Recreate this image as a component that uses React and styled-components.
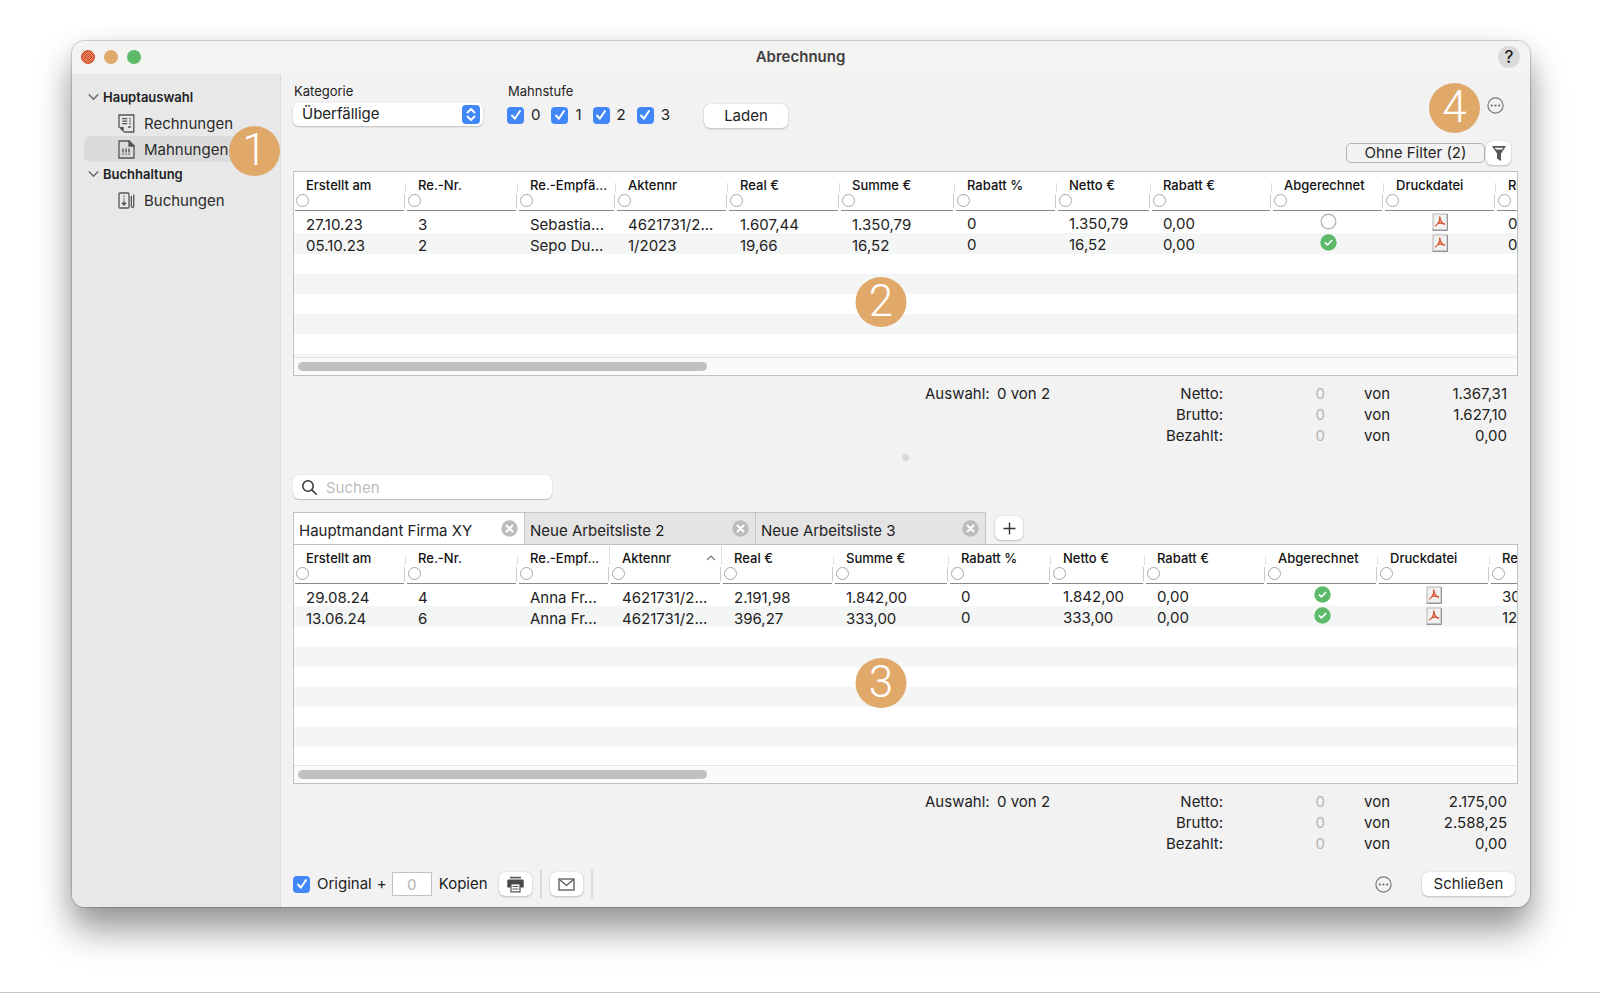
import React, { useState } from "react";
import styled, { createGlobalStyle, css } from "styled-components";

const GlobalStyle = createGlobalStyle`
  *, *::before, *::after {
    box-sizing: border-box;
  }

  body {
    background: #fff;
    color: #222;
    font-family: Inter, "Liberation Sans", sans-serif;
    font-size: 15px;
    line-height: 20px;
    margin: 0;
  }

  button, input, select {
    color: inherit;
    font: inherit;
    margin: 0;
  }
`;

const Desktop = styled.div`
  border-bottom: 1px solid #c6c6c6;
  display: flex;
  min-height: 100vh;
  overflow: hidden;
  padding: 41px 70px 85px 72px;
`;

const Window = styled.div`
  background: #f2f2f2;
  border-radius: 13px;
  box-shadow:
    0 0 1px 1px rgba(0, 0, 0, 0.18),
    0 24px 36px rgba(0, 0, 0, 0.36),
    0 8px 28px rgba(0, 0, 0, 0.12);
  display: flex;
  flex: 1;
  flex-direction: column;
  min-width: 0;
`;

const TitleBar = styled.header`
  align-items: center;
  background: #f3f3f2;
  border-radius: 13px 13px 0 0;
  display: grid;
  grid-template-columns: 1fr auto 1fr;
  height: 33px;
  padding: 0 10px 2px 9px;
`;

const Lights = styled.div`
  display: flex;
  gap: 9px;
`;

const Light = styled.button`
  background: ${({ $color }) => $color};
  border: 0;
  border-radius: 50%;
  height: 14px;
  padding: 0;
  width: 14px;

  ${({ $dotted }) =>
    $dotted &&
    css`
      background-image: repeating-conic-gradient(#d9402f 0 25%, #e09a64 0 50%);
      background-size: 2px 2px;
      border: 1px solid #d8503a;
    `}
`;

const Title = styled.h1`
  color: #404040;
  font-size: 15px;
  font-weight: 600;
  margin: 0;
`;

const HelpButton = styled.button`
  background: #dadada;
  border: 0;
  border-radius: 50%;
  font-size: 17px;
  font-weight: 500;
  height: 22px;
  justify-self: end;
  line-height: 22px;
  padding: 0;
  width: 22px;
`;

const Body = styled.div`
  display: flex;
  flex: 1;
  min-height: 0;
`;

const Sidebar = styled.nav`
  background: #e8e8e8;
  border-radius: 0 0 0 13px;
  border-right: 1px solid #dcdcdc;
  flex: none;
  padding: 11px 12px;
  width: 209px;
`;

const SideHeading = styled.h2`
  align-items: center;
  display: flex;
  font-size: 13px;
  font-weight: 600;
  gap: 4px;
  height: 25px;
  margin: 0;
  padding: 0 0 2px 4px;
`;

const SideLink = styled.a`
  align-items: center;
  background: ${({ $active }) => ($active ? "#dbdbdb" : "transparent")};
  border-radius: 6px;
  color: #2b2b2b;
  display: flex;
  gap: 9px;
  height: 26px;
  padding: 1px 0 0 34px;
  position: relative;
  text-decoration: none;
`;

const Marker = styled.span`
  background: #e0a96a;
  border-radius: 50%;
  color: #fff;
  display: block;
  flex: none;
  font-family: Roboto, sans-serif;
  font-size: 44px;
  font-weight: 300;
  height: 50px;
  line-height: 48px;
  text-align: center;
  width: 51px;
`;

const SideMarker = styled(Marker)`
  position: absolute;
  right: -12px;
  top: -10px;
  z-index: 1;
`;

const PanelMarker = styled(Marker)`
  left: 48%;
  position: absolute;
  top: ${({ $top }) => $top};
  transform: translate(-50%, -50%);
`;

const Main = styled.main`
  display: flex;
  flex: 1;
  flex-direction: column;
  min-width: 0;
  padding: 9px 12px;
`;

const Toolbar = styled.div`
  align-items: flex-start;
  display: flex;
  height: 58px;
`;

const Field = styled.div`
  border: 0;
  display: flex;
  flex-direction: column;
  font-size: 15px;
  gap: 4px;
  margin: 0 24px 0 0;
  padding: 0;
`;

const FieldLabel = styled.label`
  font-size: 13px;
  line-height: 16px;
  padding-left: 1px;
`;

const SelectBox = styled.div`
  align-items: center;
  background: #fff;
  border-radius: 6px;
  box-shadow: 0 1px 2px rgba(0, 0, 0, 0.22);
  display: flex;
  height: 23px;
  padding-right: 3px;
  width: 190px;

  svg {
    flex: none;
    pointer-events: none;
  }
`;

const Select = styled.select`
  appearance: none;
  background: transparent;
  border: 0;
  flex: 1;
  height: 22px;
  min-width: 0;
  padding: 0 0 2px 9px;
`;

const Checks = styled.div`
  display: flex;
  gap: 11px;
  height: 24px;
`;

const CheckLabel = styled.label`
  align-items: center;
  display: flex;
  gap: 7px;
`;

const CheckInput = styled.input`
  appearance: none;
  background: #4287f8
    url("data:image/svg+xml,%3Csvg xmlns='http://www.w3.org/2000/svg' viewBox='0 0 16 16' fill='none' stroke='white' stroke-width='2' stroke-linecap='round' stroke-linejoin='round'%3E%3Cpath d='M4 8.5l2.8 3.2L12 4'/%3E%3C/svg%3E")
    center / 16px 16px no-repeat;
  border-radius: 4px;
  flex: none;
  height: 17px;
  width: 17px;

  &:not(:checked) {
    background: #fff;
    box-shadow: inset 0 0 0 1px #c4c4c4;
  }
`;

const Button = styled.button`
  align-items: center;
  background: #fff;
  border: 0;
  border-radius: 6px;
  box-shadow: 0 0 1px rgba(0, 0, 0, 0.25), 0 1px 2px rgba(0, 0, 0, 0.2);
  display: flex;
  flex: none;
  height: 24px;
  justify-content: center;
  padding: 0;
  width: ${({ $width }) => $width}px;
`;

const LoadSlot = styled.div`
  align-items: flex-end;
  display: flex;
  height: 45px;
  padding-left: 10px;
`;

const ToolbarEnd = styled.div`
  display: flex;
  gap: 7px;
  margin-left: auto;
  padding-right: 14px;
`;

const MoreButton = styled.button`
  align-items: center;
  background: none;
  border: 0;
  display: flex;
  height: ${({ $height }) => $height}px;
  padding: 0;
`;

const FilterRow = styled.div`
  align-items: center;
  display: flex;
  gap: 1px;
  justify-content: flex-end;
  margin-bottom: 6px;
  padding-right: 7px;
`;

const FilterButton = styled.button`
  background: #f2f2f2;
  border: 1px solid #b2b2b2;
  border-radius: 5px;
  height: 20px;
  line-height: 18px;
  padding: 0;
  width: 139px;
`;

const Panel = styled.section`
  background: #fff;
  border: 1px solid #c2c2c2;
  display: flex;
  flex: ${({ $grow }) => ($grow ? 1 : "none")};
  flex-direction: column;
  overflow: hidden;
  position: relative;
`;

const Table = styled.table`
  border-collapse: collapse;
  flex: none;
  table-layout: fixed;
  width: 1304px;
`;

const HeadCell = styled.th`
  background:
    linear-gradient(#dedede, #dedede) right 0 top ${({ $tall }) => ($tall ? 1 : 11)}px / 1px ${({ $tall }) => ($tall ? 19 : 9)}px no-repeat,
    linear-gradient(#cbcbcb, #cbcbcb) right 1px top 22px / 1px 14px no-repeat;
  font-size: 13px;
  font-weight: 500;
  height: 40px;
  padding: 0 2px 0 1px;
  text-align: left;
  vertical-align: top;
`;

const HeadInner = styled.div`
  border-bottom: 1px solid #888;
  height: 39px;
  padding-top: 4px;
`;

const HeadText = styled.div`
  align-items: center;
  color: #111;
  display: flex;
  height: 17px;
  justify-content: space-between;
  margin-bottom: 1px;
  padding: 0 4px 0 11px;
  white-space: nowrap;
`;

const HeadFilter = styled.button`
  background: #fff;
  border: 1px solid #a6a6a6;
  border-radius: 50%;
  display: block;
  height: 13px;
  margin-left: 1px;
  padding: 0;
  width: 13px;
`;

const Row = styled.tr`
  &:nth-child(even) {
    background: #f4f5f5;
  }
`;

const Cell = styled.td`
  color: #222;
  height: 21px;
  line-height: 16px;
  overflow: hidden;
  padding: ${({ $raised }) => ($raised ? "4px 0 1px" : "5px 0 0")} 12px;
  white-space: nowrap;
`;

const IconCell = styled.td`
  height: 21px;
  padding: 0;
  vertical-align: top;

  svg {
    display: block;
    margin: 1px auto 0;
  }
`;

const Stripes = styled.div`
  background: repeating-linear-gradient(#fff 0 20px, #f4f5f5 20px 40px);
  flex: 1 0 ${({ $height }) => $height}px;
`;

const ScrollTrack = styled.div`
  background: #fafafa;
  border-top: 1px solid #e4e4e4;
  flex: none;
  height: 18px;
  padding: 4px;
`;

const ScrollThumb = styled.div`
  background: #c1c1c1;
  border-radius: 5px;
  height: 9px;
  width: 409px;
`;

const Totals = styled.div`
  display: grid;
  grid-template-columns: 1fr 72px 66px 160px 102px 65px 117px;
  line-height: 21px;
  padding: 7px 11px 1px 0;
`;

const TotalText = styled.span`
  color: ${({ $dim }) => ($dim ? "#b5b5b5" : "#222")};
  grid-column: ${({ $column }) => $column};
  text-align: ${({ $left }) => ($left ? "left" : "right")};
  white-space: nowrap;
`;

const Splitter = styled.div`
  align-items: center;
  display: flex;
  height: 20px;
  justify-content: center;
  margin-bottom: 8px;

  &::before {
    background: #d9d9d9;
    border-radius: 50%;
    content: "";
    height: 7px;
    width: 7px;
  }
`;

const Search = styled.label`
  align-items: center;
  background: #fff;
  border-radius: 6px;
  box-shadow: 0 0 1px rgba(0, 0, 0, 0.2), 0 1px 1px rgba(0, 0, 0, 0.2);
  display: flex;
  gap: 9px;
  height: 24px;
  margin-bottom: 13px;
  padding-left: 9px;
  width: 259px;
`;

const SearchInput = styled.input`
  background: none;
  border: 0;
  flex: 1;
  min-width: 0;
  outline: 0;
  padding: 1px 0 0;

  &::placeholder {
    color: #bdbdbd;
  }
`;

const Tabs = styled.div`
  align-items: center;
  display: flex;
  height: 32px;
`;

const Tab = styled.div`
  align-items: center;
  background: ${({ $active }) => ($active ? "#fff" : "#e4e4e4")};
  border: 1px solid #c4c4c4;
  border-bottom: 0;
  border-right-width: ${({ $last }) => ($last ? 1 : 0)}px;
  display: flex;
  height: 32px;
  justify-content: space-between;
  padding: 0 6px 0 5px;
  width: 231px;
`;

const TabButton = styled.button`
  background: none;
  border: 0;
  padding: 4px 0 0;
`;

const TabClose = styled.button`
  background: none;
  border: 0;
  display: flex;
  padding: 0;
`;

const AddSlot = styled.div`
  padding-left: 9px;
`;

const Footer = styled.footer`
  align-items: center;
  display: flex;
  padding: 15px 3px 0 0;
`;

const CopiesInput = styled.input`
  background: #fff;
  border: 1px solid #c2c2c2;
  color: #b5b5b5;
  height: 24px;
  margin: 0 7px 0 5px;
  padding: 0;
  text-align: center;
  width: 40px;
`;

const Plus = styled.span`
  padding-left: 5px;
`;

const CopiesLabel = styled.label`
  margin-right: 11px;
`;

const Divider = styled.span`
  background: #dadada;
  height: 28px;
  margin: 0 8px;
  width: 2px;
`;

const FooterEnd = styled.div`
  align-items: center;
  display: flex;
  gap: 30px;
  margin-left: auto;
`;

const Chevron = () => (
  <svg width="11" height="8" viewBox="0 0 11 8" fill="none" stroke="#666" strokeWidth="1.4" strokeLinecap="round">
    <path d="M1.2 1.8l4.3 4.4 4.3-4.4" />
  </svg>
);

const InvoiceIcon = () => (
  <svg width="17" height="19" viewBox="0 0 17 19" fill="none" stroke="#555" strokeWidth="1.3">
    <path d="M1 13.5V1h14.8v17H6" />
    <path d="M4.2 4.7h5M4.2 7.2h5M4.2 9.7h5M11.2 4.7h1.6M11.2 7.2h1.6M11.2 9.7h1.6M10 13h3" />
    <path d="M.5 13h5.3v5.5z" fill="#555" stroke="none" />
  </svg>
);

const ReminderIcon = () => (
  <svg width="17" height="19" viewBox="0 0 17 19" fill="none" stroke="#555" strokeWidth="1.3">
    <path d="M11 1H1v17h15V6z" />
    <path d="M11 1l5 5h-5z" fill="#555" />
    <path d="M5 8.5v4M8 8.5v4M11 8.5v4M5 13.5v1.3M8 13.5v1.3M11 13.5v1.3" strokeWidth="1.4" />
  </svg>
);

const LedgerIcon = () => (
  <svg width="17" height="17" viewBox="0 0 17 17" fill="none" stroke="#555" strokeWidth="1.3">
    <rect x="1" y="1" width="10" height="15" rx="1" />
    <path d="M6 3.5v1.3M6 6.3v1.3" />
    <path d="M6 8.5v4M3.9 10.8L6 13l2.1-2.2" />
    <path d="M13.3 4v10q0 1.4 1.2 1.4t1.2-1.4V2.5" />
  </svg>
);

const UpDown = () => (
  <svg width="18" height="19" viewBox="0 0 18 19">
    <rect width="18" height="19" rx="4" fill="#4287f8" />
    <path d="M5.5 7.5L9 4l3.5 3.5M5.5 11.5L9 15l3.5-3.5" fill="none" stroke="#fff" strokeWidth="1.8" strokeLinecap="round" strokeLinejoin="round" />
  </svg>
);

const MoreIcon = () => (
  <svg width="17" height="17" viewBox="0 0 17 17" fill="#666">
    <circle cx="8.5" cy="8.5" r="7.6" fill="none" stroke="#777" strokeWidth="1.2" />
    <circle cx="4.8" cy="8.5" r="1.1" />
    <circle cx="8.5" cy="8.5" r="1.1" />
    <circle cx="12.2" cy="8.5" r="1.1" />
  </svg>
);

const FunnelIcon = () => (
  <svg width="16" height="17" viewBox="0 0 16 17">
    <path d="M1 1h14l-5 7.5V16l-4-2.5v-5z" fill="#555" />
    <path d="M3.8 2.8h8.4L11 4.6H5z" fill="#fff" />
  </svg>
);

const SearchIcon = () => (
  <svg width="15" height="15" viewBox="0 0 15 15" fill="none" stroke="#333" strokeWidth="1.5" strokeLinecap="round">
    <circle cx="6" cy="6" r="5.2" />
    <path d="M9.9 9.9l4.3 4.3" />
  </svg>
);

const CloseIcon = () => (
  <svg width="17" height="17" viewBox="0 0 17 17">
    <circle cx="8.5" cy="8.5" r="8.2" fill="#bcbcbc" />
    <path d="M5.5 5.5l6 6M11.5 5.5l-6 6" stroke="#fff" strokeWidth="2" strokeLinecap="round" />
  </svg>
);

const PlusIcon = () => (
  <svg width="13" height="13" viewBox="0 0 13 13">
    <path d="M6.5 .5v12M.5 6.5h12" stroke="#333" strokeWidth="1.4" />
  </svg>
);

const SortIcon = () => (
  <svg width="10" height="6" viewBox="0 0 10 6" fill="none" stroke="#777" strokeWidth="1.2">
    <path d="M1 5l4-4 4 4" />
  </svg>
);

const StatusIcon = ({ done }) => (
  <svg width="17" height="17" viewBox="0 0 17 17" fill="none">
    {done ? (
      <>
        <circle cx="8.5" cy="8.5" r="8.2" fill="#5cba68" />
        <path d="M4.8 8.3l2.7 2.6L12.2 6" stroke="#fff" strokeWidth="1.6" />
      </>
    ) : (
      <circle cx="8.5" cy="8.5" r="7.3" fill="#fff" stroke="#b9b9b9" strokeWidth="1.5" />
    )}
  </svg>
);

const PdfIcon = () => (
  <svg width="16" height="18" viewBox="0 0 16 18" fill="none">
    <rect x="1" y="1" width="14" height="16" fill="#f1f1f1" stroke="#b4b4b4" />
    <path d="M.5 17.3h15.2V1" stroke="#858585" />
    <path d="M7.6 3.5c.8 3-.2 6.5-4.4 9.7M7.8 4c.4 3.8 2 6.4 5 7.6M5.2 10.9c2.2-1 4.6-1 7.8.3" stroke="#d8512c" strokeWidth="1.3" />
  </svg>
);

const PrinterIcon = () => (
  <svg width="17" height="17" viewBox="0 0 17 17">
    <path d="M3 .8h11v1.6H3z" fill="#555" />
    <path d="M1.5 3.4h14q1.2 0 1.2 1.2v7H13V8H4v3.6H.3v-7q0-1.2 1.2-1.2z" fill="#484848" />
    <path d="M4 8h9v7.8H4z" fill="#fff" stroke="#555" strokeWidth="1.2" />
    <path d="M5.5 10.5h6M5.5 13h6" stroke="#555" strokeWidth="1.1" />
  </svg>
);

const MailIcon = () => (
  <svg width="17" height="13" viewBox="0 0 17 13" fill="none" stroke="#555" strokeWidth="1.3">
    <rect x="1" y="1" width="15" height="11" />
    <path d="M1.5 1.5l7 6 7-6" />
  </svg>
);

const makeColumns = (recipient, recipientWidth, sorted) => [
  { title: "Erstellt am", width: 112 },
  { title: "Re.-Nr.", width: 112 },
  { title: recipient, width: recipientWidth, tall: sorted },
  { title: "Aktennr", width: 112, tall: sorted, sorted },
  { title: "Real €", width: 112 },
  { title: "Summe €", width: 115 },
  { title: "Rabatt %", width: 102 },
  { title: "Netto €", width: 94 },
  { title: "Rabatt €", width: 121 },
  { title: "Abgerechnet", width: 112 },
  { title: "Druckdatei", width: 112 },
  { title: "Re" },
];

const overdueColumns = makeColumns("Re.-Empfä...", 98, false);
const worklistColumns = makeColumns("Re.-Empf...", 92, true);

const overdueRows = [
  {
    values: ["27.10.23", "3", "Sebastia...", "4621731/2...", "1.607,44", "1.350,79", "0", "1.350,79", "0,00"],
    done: false,
    rest: "0",
  },
  {
    values: ["05.10.23", "2", "Sepo Du...", "1/2023", "19,66", "16,52", "0", "16,52", "0,00"],
    done: true,
    rest: "0",
  },
];

const worklistRows = [
  {
    values: ["29.08.24", "4", "Anna Fr...", "4621731/2...", "2.191,98", "1.842,00", "0", "1.842,00", "0,00"],
    done: true,
    rest: "30",
  },
  {
    values: ["13.06.24", "6", "Anna Fr...", "4621731/2...", "396,27", "333,00", "0", "333,00", "0,00"],
    done: true,
    rest: "12",
  },
];

const tabs = ["Hauptmandant Firma XY", "Neue Arbeitsliste 2", "Neue Arbeitsliste 3"];

const InvoicePanel = ({ columns, rows, filler, grow, marker, markerTop }) => (
  <Panel $grow={grow}>
    <Table>
      <colgroup>
        {columns.map((column) => (
          <col key={column.title} width={column.width} />
        ))}
      </colgroup>
      <thead>
        <tr>
          {columns.map((column) => (
            <HeadCell key={column.title} $tall={column.tall}>
              <HeadInner>
                <HeadText>
                  {column.title}
                  {column.sorted && <SortIcon />}
                </HeadText>
                <HeadFilter aria-label={`Filter ${column.title}`} />
              </HeadInner>
            </HeadCell>
          ))}
        </tr>
      </thead>
      <tbody>
        {rows.map((row) => (
          <Row key={row.values[0]}>
            {row.values.map((value, i) => (
              <Cell key={i} $raised={i > 5}>
                {value}
              </Cell>
            ))}
            <IconCell>
              <StatusIcon done={row.done} />
            </IconCell>
            <IconCell>
              <PdfIcon />
            </IconCell>
            <Cell $raised>{row.rest}</Cell>
          </Row>
        ))}
      </tbody>
    </Table>
    <Stripes $height={filler} />
    <ScrollTrack>
      <ScrollThumb />
    </ScrollTrack>
    <PanelMarker $top={markerTop}>{marker}</PanelMarker>
  </Panel>
);

const Summary = ({ netto, brutto, bezahlt }) => (
  <Totals>
    {[
      ["Netto:", netto],
      ["Brutto:", brutto],
      ["Bezahlt:", bezahlt],
    ].map(([label, value], i) => (
      <React.Fragment key={label}>
        {i === 0 && (
          <>
            <TotalText $column={2} $left>
              Auswahl:
            </TotalText>
            <TotalText $column={3} $left>
              0 von 2
            </TotalText>
          </>
        )}
        <TotalText $column={4}>{label}</TotalText>
        <TotalText $column={5} $dim>
          0
        </TotalText>
        <TotalText $column={6}>von</TotalText>
        <TotalText $column={7}>{value}</TotalText>
      </React.Fragment>
    ))}
  </Totals>
);

const App = () => {
  const [activeTab, setActiveTab] = useState(0);

  return (
    <>
      <GlobalStyle />
      <Desktop>
        <Window>
          <TitleBar>
            <Lights>
              <Light $color="#dd5f40" $dotted aria-label="Fenster schließen" />
              <Light $color="#e0a96a" aria-label="Minimieren" />
              <Light $color="#5cba68" aria-label="Vergrößern" />
            </Lights>
            <Title>Abrechnung</Title>
            <HelpButton>?</HelpButton>
          </TitleBar>
          <Body>
            <Sidebar>
              <SideHeading>
                <Chevron />
                Hauptauswahl
              </SideHeading>
              <SideLink href="#rechnungen">
                <InvoiceIcon />
                Rechnungen
              </SideLink>
              <SideLink href="#mahnungen" $active>
                <ReminderIcon />
                Mahnungen
                <SideMarker>1</SideMarker>
              </SideLink>
              <SideHeading>
                <Chevron />
                Buchhaltung
              </SideHeading>
              <SideLink href="#buchungen">
                <LedgerIcon />
                Buchungen
              </SideLink>
            </Sidebar>
            <Main>
              <Toolbar>
                <Field>
                  <FieldLabel htmlFor="kategorie">Kategorie</FieldLabel>
                  <SelectBox>
                    <Select id="kategorie">
                      <option>Überfällige</option>
                    </Select>
                    <UpDown />
                  </SelectBox>
                </Field>
                <Field role="group" aria-labelledby="mahnstufe">
                  <FieldLabel as="span" id="mahnstufe">
                    Mahnstufe
                  </FieldLabel>
                  <Checks>
                    {[0, 1, 2, 3].map((level) => (
                      <CheckLabel key={level}>
                        <CheckInput type="checkbox" defaultChecked />
                        {level}
                      </CheckLabel>
                    ))}
                  </Checks>
                </Field>
                <LoadSlot>
                  <Button $width={84}>Laden</Button>
                </LoadSlot>
                <ToolbarEnd>
                  <Marker>4</Marker>
                  <MoreButton $height={44} aria-label="Weitere Aktionen">
                    <MoreIcon />
                  </MoreButton>
                </ToolbarEnd>
              </Toolbar>
              <FilterRow>
                <FilterButton>Ohne Filter (2)</FilterButton>
                <Button $width={25} aria-label="Filter">
                  <FunnelIcon />
                </Button>
              </FilterRow>
              <InvoicePanel columns={overdueColumns} rows={overdueRows} filler={103} marker="2" markerTop="64%" />
              <Summary netto="1.367,31" brutto="1.627,10" bezahlt="0,00" />
              <Splitter />
              <Search>
                <SearchIcon />
                <SearchInput type="search" placeholder="Suchen" aria-label="Suchen" />
              </Search>
              <Tabs>
                {tabs.map((name, i) => (
                  <Tab key={name} $active={i === activeTab} $last={i === tabs.length - 1}>
                    <TabButton onClick={() => setActiveTab(i)}>{name}</TabButton>
                    <TabClose aria-label={`${name} schließen`}>
                      <CloseIcon />
                    </TabClose>
                  </Tab>
                ))}
                <AddSlot>
                  <Button $width={28} aria-label="Neue Arbeitsliste">
                    <PlusIcon />
                  </Button>
                </AddSlot>
              </Tabs>
              <InvoicePanel columns={worklistColumns} rows={worklistRows} filler={138} grow marker="3" markerTop="58%" />
              <Summary netto="2.175,00" brutto="2.588,25" bezahlt="0,00" />
              <Footer>
                <CheckLabel>
                  <CheckInput type="checkbox" defaultChecked />
                  Original
                </CheckLabel>
                <Plus>+</Plus>
                <CopiesInput id="kopien" defaultValue="0" />
                <CopiesLabel htmlFor="kopien">Kopien</CopiesLabel>
                <Button $width={33} aria-label="Drucken">
                  <PrinterIcon />
                </Button>
                <Divider />
                <Button $width={33} aria-label="Per E-Mail senden">
                  <MailIcon />
                </Button>
                <Divider />
                <FooterEnd>
                  <MoreButton $height={24} aria-label="Weitere Aktionen">
                    <MoreIcon />
                  </MoreButton>
                  <Button $width={93}>Schließen</Button>
                </FooterEnd>
              </Footer>
            </Main>
          </Body>
        </Window>
      </Desktop>
    </>
  );
};

export default App;
